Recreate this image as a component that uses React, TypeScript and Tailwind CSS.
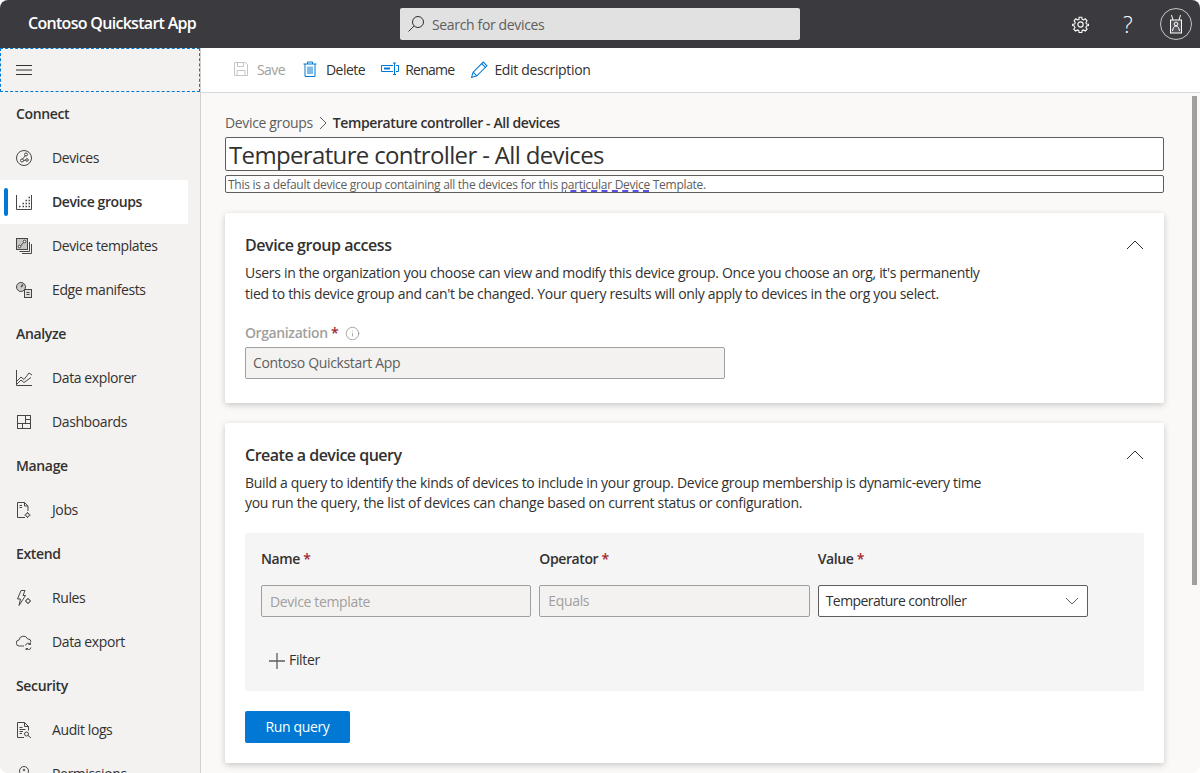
import { Info } from "lucide-react";
import type { ReactNode } from "react";

const ic = { fill: "none", stroke: "currentColor", strokeWidth: 1 } as const;

function Svg({ children, size = 16, className = "" }: { children: ReactNode; size?: number; className?: string }) {
  return (
    <svg width={size} height={size} viewBox="0 0 16 16" {...ic} className={className}>
      {children}
    </svg>
  );
}

const icons: Record<string, ReactNode> = {
  devices: (
    <Svg>
      <circle cx="8" cy="8" r="7.5" />
      <circle cx="6" cy="10.500" r="1.500" />
      <circle cx="10" cy="4.500" r="1.500" />
      <circle cx="11" cy="10" r="1.300" />
      <path d="M6.500 9L9.300 5.800M7.500 10.500l2.300-.4" />
    </Svg>
  ),
  groups: (
    <Svg>
      <path d="M.5 1v14.500H15.500V1" />
      <path d="M3 12.500h1.500M6.500 12.500H8M9.500 12.500H11M12.500 12.500H14M6.500 9.500H8M9.500 9.500H11M12.500 9.500H14M9.500 6.500H11M12.500 6.500H14M12.500 3.500H14" strokeWidth="1.500" />
    </Svg>
  ),
  templates: (
    <Svg>
      <rect x=".5" y=".5" width="11" height="11" fill="#b3b0ad" fillOpacity=".7" />
      <path d="M13.500 4v9.500H3.500M15.500 6v9.500H6" />
      <path d="M4 8.500L8 4" />
      <circle cx="3.500" cy="8.500" r="1.300" fill="#f3f2f1" />
      <circle cx="8.500" cy="3.500" r="1.300" fill="#f3f2f1" />
    </Svg>
  ),
  edge: (
    <Svg>
      <circle cx="5" cy="5" r="4.500" fill="#b3b0ad" fillOpacity=".6" />
      <path d="M5 5l2-2.500" strokeWidth="1.300" />
      <rect x="8.500" y="7.500" width="7" height="8" fill="#e1dfdd" />
      <path d="M10.500 10.500h3M10.500 12.500h3" />
    </Svg>
  ),
  explorer: (
    <Svg>
      <path d="M.5 0v15.500H16" />
      <path d="M1 11l4-4 3 2.500L13 3l3 2" />
      <path d="M1 14l4-4 3 2.500 7-5" />
    </Svg>
  ),
  dashboards: (
    <Svg>
      <rect x="1.500" y="1.500" width="13" height="13" />
      <path d="M9.500 1.500v8M1.500 9.500h13M9.500 5.500h5M6.500 9.500v5" />
    </Svg>
  ),
  jobs: (
    <Svg>
      <path d="M9 15.500H1.500V.5h7l3.500 3.500v5" />
      <path d="M8.500.5V4H12M3.500 3.500h2.500M3.500 5.500h2.500" />
      <circle cx="11.500" cy="13" r="1.800" />
      <path d="M11.500 10v1M11.500 15v1M8.500 13h1M13.500 13h1" />
    </Svg>
  ),
  rules: (
    <Svg>
      <path d="M5 .5h4L7 5.500h2.500L3 15.500l1.500-6.500H1.500z" />
      <circle cx="12" cy="11" r="2" />
      <path d="M12 8v1M12 13v1M9 11h1M14 11h1" />
    </Svg>
  ),
  export: (
    <Svg>
      <path d="M8 12H3.500a3 3 0 0 1-.5-6 4.500 4.500 0 0 1 8.600-1.100 3.200 3.200 0 0 1 3.400 3" />
      <path d="M9.500 11.500a3 3 0 0 1 5-1.500M15 13.500a3 3 0 0 1-5 1.500M14.500 8.500v2h-2M10 16.500v-2h2" />
    </Svg>
  ),
  audit: (
    <Svg>
      <path d="M8 15.500H1.500V.5h7l4 4v4" />
      <path d="M8.500.5v4h4M3.500 5.500h3M3.500 7.500h6M3.500 9.500h3.500M3.500 11.500h2.500" />
      <circle cx="10.500" cy="12" r="2" />
      <path d="M12 13.500l3 2.500" />
    </Svg>
  ),
  permissions: (
    <Svg>
      <circle cx="8" cy="5" r="4.500" />
      <circle cx="8" cy="4" r=".8" />
    </Svg>
  ),
};

const nav = [
  { section: "Connect", items: [["Devices", "devices"], ["Device groups", "groups"], ["Device templates", "templates"], ["Edge manifests", "edge"]] },
  { section: "Analyze", items: [["Data explorer", "explorer"], ["Dashboards", "dashboards"]] },
  { section: "Manage", items: [["Jobs", "jobs"]] },
  { section: "Extend", items: [["Rules", "rules"], ["Data export", "export"]] },
  { section: "Security", items: [["Audit logs", "audit"], ["Permissions", "permissions"]] },
];

function Sidebar() {
  return (
    <aside className="w-[201px] shrink-0 overflow-hidden border-r border-[#d2d0ce] bg-[#f3f2f1]">
      <div className="flex h-[44px] items-center border border-dashed border-[#0078d4] pl-[15px]">
        <svg width="16" height="10" viewBox="0 0 16 10" stroke="#323130" strokeWidth="1">
          <path d="M0 .5h16M0 5h16M0 9.500h16" />
        </svg>
      </div>
      {nav.map((group) => (
        <div key={group.section}>
          <div className="flex h-[44px] items-center pb-[2px] pl-4 text-[14px] font-semibold">{group.section}</div>
          {group.items.map(([label, icon]) => {
            const active = label === "Device groups";
            return (
              <div key={label} className={`relative flex h-[44px] w-[188px] items-center ${active ? "bg-white font-semibold" : ""}`}>
                {active && <span className="absolute top-2 bottom-2 left-1 w-1 rounded-sm bg-[#0078d4]" />}
                <span className="flex w-[52px] justify-start pl-4 text-[#484644]">{icons[icon]}</span>
                <span className="pb-[2px] text-[14px] tracking-[-0.4px]">{label}</span>
              </div>
            );
          })}
        </div>
      ))}
    </aside>
  );
}

function ToolButton({ icon, label, disabled, className = "" }: { icon: ReactNode; label: string; disabled?: boolean; className?: string }) {
  return (
    <div className={`flex items-center pb-[2px] text-[14px] ${disabled ? "text-[#a19f9d]" : ""} ${className}`}>
      {icon}
      {label}
    </div>
  );
}

function Toolbar() {
  return (
    <div className="flex h-[45px] shrink-0 items-center border-b border-[#d9d8d7] bg-white pl-[32px]">
      <ToolButton
        disabled
        label="Save"
        className="gap-[8px] tracking-[-0.6px]"
        icon={
          <Svg className="text-[#c8c6c4]">
            <path d="M1.500 1.500h11l2 2v11h-13z" />
            <path d="M4.500 1.500v4h6v-4M4 14.500v-5h8v5" />
          </Svg>
        }
      />
      <ToolButton
        label="Delete"
        className="ml-[17px] gap-[8px] tracking-[-0.5px]"
        icon={
          <Svg className="text-[#0078d4]">
            <path d="M1.500 3h13M5.500 3V1h5v2M3 3v12.500h10V3M6 5.500v7.500M8 5.500v7.500M10 5.500v7.500" />
          </Svg>
        }
      />
      <ToolButton
        label="Rename"
        className="ml-[16px] gap-[6px] tracking-[-0.75px]"
        icon={
          <svg width="18" height="16" viewBox="0 0 18 16" {...ic} className="text-[#0078d4]">
            <path d="M12 4.500H.5v6H12" strokeWidth="1" />
            <path d="M3 7.500h6" strokeWidth="2" />
            <path d="M12 2h3M12 13.500h3M13.500 2v11.500M15 4.500h2.500v6H15" />
          </svg>
        }
      />
      <ToolButton
        label="Edit description"
        className="ml-[17px] gap-[6px]"
        icon={
          <Svg size={17} className="text-[#0078d4]">
            <path d="M.5 15.500l1.500-5L11.500 1l3.500 3.500L5.500 14z" />
            <path d="M2 10.500L5.500 14M10 2.500L13.500 6" />
          </Svg>
        }
      />
    </div>
  );
}

function Required({ children, className = "" }: { children: ReactNode; className?: string }) {
  return (
    <div className={`pb-[2px] text-[14px] font-semibold tracking-[-0.4px] ${className}`}>
      {children} <span className="text-[#a4262c]">*</span>
    </div>
  );
}

function Card({ title, titleClass, children }: { title: string; titleClass: string; children: ReactNode }) {
  return (
    <section className="relative rounded-[2px] bg-white px-5 pt-[22px] shadow-[0_2px_6px_rgba(0,0,0,0.2)]">
      <h2 className={`text-[16px] leading-[20px] font-semibold ${titleClass}`}>{title}</h2>
      <svg width="18" height="10" viewBox="0 0 18 10" fill="none" stroke="#323130" strokeWidth="1" className="absolute top-[27px] right-[20px]">
        <path d="M1 9l8-8 8 8" />
      </svg>
      {children}
    </section>
  );
}

function DisabledInput({ value, className = "" }: { value: string; className?: string }) {
  return (
    <div className={`flex h-[32px] items-center rounded-[2px] border border-[#a19f9d] bg-[#f3f2f1] px-2 text-[14px] ${className}`}>
      {value}
    </div>
  );
}

export default function App() {
  return (
    <div className="flex h-[773px] w-[1200px] flex-col overflow-hidden rounded-lg font-['Open_Sans',sans-serif] tracking-[-0.35px] text-[#323130]">
      <header className="relative flex h-[48px] shrink-0 items-center bg-[#3b3a3f] text-white">
        <div className="w-[400px] pb-[2px] pl-7 text-[16px] font-semibold tracking-[-0.7px]">Contoso Quickstart App</div>
        <div className="flex h-[32px] w-[400px] items-center gap-[8px] rounded-[2px] bg-[#e1e1e1] pl-2 text-[14px] text-[#605e5c]">
          <svg width="16" height="18" viewBox="0 0 16 18" fill="none" stroke="#323130" strokeWidth="1">
            <circle cx="10" cy="7" r="5.500" />
            <path d="M6 11l-5.500 5.500" />
          </svg>
          <span>Search for devices</span>
        </div>
        <div className="ml-auto flex items-center pr-[8px]">
          <svg width="17" height="17" viewBox="0 0 18 18" fill="none" stroke="white" strokeWidth="1.200">
            <circle cx="9" cy="9" r="2.800" />
            <path d="M7.500 1h3l.4 2.300 1.500.7 2-1.300 2 2.200-1.300 2 .6 1.500 2.300.4v1.400l-2.300.6-.6 1.500 1.300 2-2 2-2-1.200-1.500.6-.4 2.300h-3l-.4-2.300-1.500-.6-2 1.200-2-2 1.300-2-.6-1.500L.3 10.200V8.800l2.300-.4.600-1.500-1.300-2 2-2.200 2 1.300 1.500-.7z" transform="translate(.4 .4) scale(.95)" />
          </svg>
          <span className="ml-[34px] w-[12px] text-[23px] leading-none font-light">?</span>
          <div className="ml-[25px] flex h-[32px] w-[32px] items-center justify-center rounded-full border border-[#c8c6c4]">
            <svg width="14" height="20" viewBox="0 0 14 20" fill="none" stroke="white" strokeWidth="1">
              <path d="M4 6L2.500 1M10 6l1.500-5" />
              <rect x="1.500" y="6" width="11" height="13" fill="#55545a" />
              <circle cx="7" cy="10" r="1.800" />
              <path d="M3.500 17c.5-3 1.500-5 3.500-5s3 2 3.500 5" />
            </svg>
          </div>
        </div>
      </header>
      <div className="flex min-h-0 flex-1">
        <Sidebar />
        <main className="relative flex min-w-0 flex-1 flex-col bg-[#faf9f8]">
          <Toolbar />
          <span className="absolute top-[48px] right-[3px] h-[489px] w-[5px] bg-[#a19f9d]" />
          <div className="flex flex-col pr-[36px] pl-[24px]">
            <div className="mt-[20px] flex h-[20px] items-center text-[14px] leading-[20px]">
              <span className="text-[#605e5c]">Device groups</span>
              <svg width="10" height="14" viewBox="0 0 10 14" fill="none" stroke="#605e5c" strokeWidth="1" className="mx-[5px]">
                <path d="M2 1l6 6-6 6" />
              </svg>
              <span className="font-semibold tracking-[-0.4px]">Temperature controller - All devices</span>
            </div>
            <div className="mt-[4px] flex h-[34px] items-center rounded-[2px] border border-[#605e5c] bg-white pt-[2px] pl-[3px] text-[24px] tracking-[-0.65px]">
              Temperature controller - All devices
            </div>
            <div className="mt-[4px] flex h-[18px] items-center rounded-[2px] border border-[#605e5c] bg-white pt-[2px] pl-[2px] text-[12px] tracking-[-0.28px] text-[#605e5c]">
              This is a default device group containing all the devices for this&nbsp;
              <span className="underline decoration-[#5b50e6] decoration-dashed decoration-2 underline-offset-[1px]">particular Device</span>&nbsp;Template.
            </div>
            <div className="mt-[20px] flex flex-col gap-[20px]">
              <Card title="Device group access" titleClass="tracking-[-0.45px]">
                <p className="mt-[7px] w-[745px] text-[14px] leading-[21px] tracking-[-0.31px]">
                  Users in the organization you choose can view and modify this device group. Once you choose an org, it's permanently tied to this device group and can't be changed. Your query results will only apply to devices in the org you select.
                </p>
                <div className="mt-[19px] flex h-[20px] items-center gap-[7px]">
                  <Required className="text-[#a19f9d]">Organization</Required>
                  <Info size={15} strokeWidth={1} className="text-[#797775]" />
                </div>
                <DisabledInput value="Contoso Quickstart App" className="mt-[4px] w-[480px] pb-[2px] pl-[7px] text-[#605e5c]" />
                <div className="h-[24px]" />
              </Card>
              <Card title="Create a device query" titleClass="tracking-[-0.5px]">
                <p className="mt-[8px] w-[745px] text-[14px] leading-[20px] tracking-[-0.31px]">
                  Build a query to identify the kinds of devices to include in your group. Device group membership is dynamic-every time you run the query, the list of devices can change based on current status or configuration.
                </p>
                <div className="mt-[20px] h-[158px] rounded-[2px] bg-[#f5f5f5] px-4 pt-[15px]">
                  <div className="grid w-[827px] grid-cols-3 gap-x-2">
                    <Required>Name</Required>
                    <Required>Operator</Required>
                    <Required>Value</Required>
                    <DisabledInput value="Device template" className="mt-[14px] text-[#a19f9d]" />
                    <DisabledInput value="Equals" className="mt-[14px] pb-[2px] text-[#a19f9d]" />
                    <div className="mt-[14px] flex h-[32px] items-center justify-between rounded-[2px] border border-[#605e5c] bg-white pr-[8px] pl-[7px] text-[14px]">
                      <span className="pb-[2px] tracking-[-0.55px]">Temperature controller</span>
                      <svg width="14" height="8" viewBox="0 0 14 8" fill="none" stroke="#605e5c" strokeWidth="1">
                        <path d="M1 1l6 6 6-6" />
                      </svg>
                    </div>
                  </div>
                  <div className="mt-[32px] ml-[8px] flex items-center gap-[4px] text-[14px]">
                    <svg width="16" height="16" viewBox="0 0 16 16" stroke="#605e5c" strokeWidth="1.300">
                      <path d="M0 8h16M8 0v16" />
                    </svg>
                    <span className="pb-[2px]">Filter</span>
                  </div>
                </div>
                <button className="mt-[20px] mb-[20px] block h-[32px] w-[105px] rounded-[2px] bg-[#0078d4] pb-[2px] text-[14px] text-white">Run query</button>
              </Card>
            </div>
          </div>
        </main>
      </div>
    </div>
  );
}
